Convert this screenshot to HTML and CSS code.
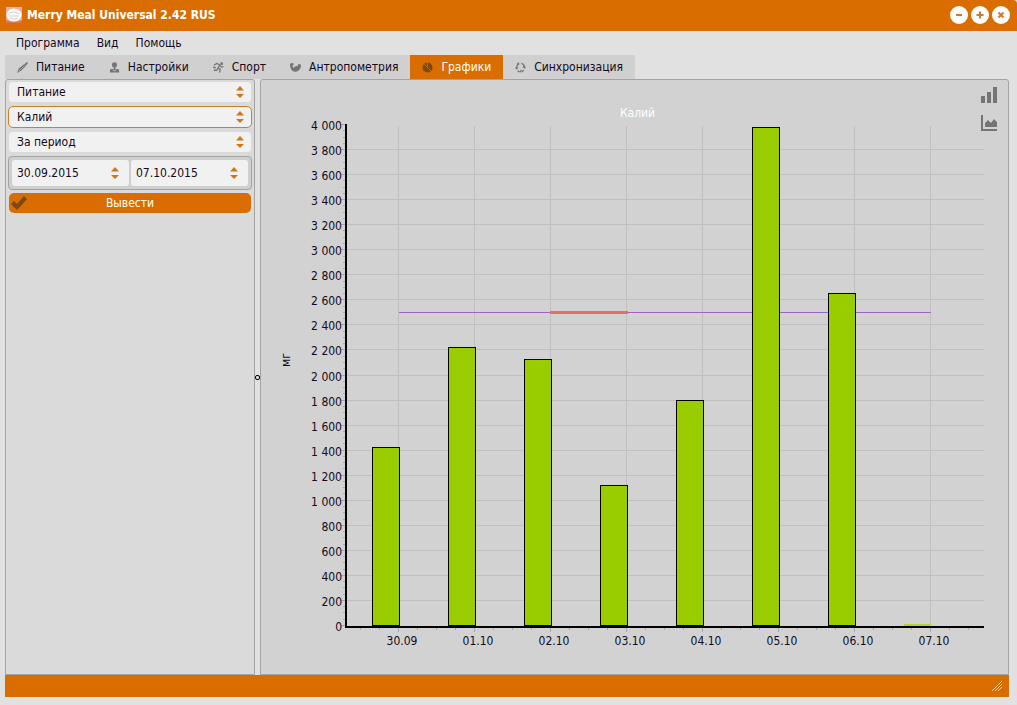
FILE: index.html
```html
<!DOCTYPE html>
<html lang="ru">
  <head>
    <meta charset="UTF-8" />
    <meta name="viewport" content="width=device-width, initial-scale=1.0" />
    <title>Merry Meal Universal 2.42 RUS</title>
    <link rel="stylesheet" href="styles.css">
  </head>
  <body>
    <header class="titlebar">
      <svg class="logo" viewBox="0 0 16 16">
        <rect width="16" height="16" fill="#e9b0a0" />
        <ellipse cx="8" cy="8" rx="7.5" ry="6.5" fill="#fff" />
        <path d="M2 8 Q5 4 8 5 T14 7 M3 9 H13 M4 11 Q8 13 12 11" fill="none" stroke="#d8cac4" />
        <path d="M0 13 Q8 17 16 13 V16 H0z" fill="#d9744c" />
      </svg>
      <h1>Merry Meal Universal 2.42 RUS</h1>
      <div class="window-buttons">
        <button aria-label="Свернуть"><svg viewBox="0 0 18 18"><path d="M6 9h6" /></svg></button>
        <button aria-label="Развернуть"><svg viewBox="0 0 18 18"><path d="M5.500 9h7M9 5.500v7" /></svg></button>
        <button aria-label="Закрыть"><svg viewBox="0 0 18 18"><path d="M6.500 6.500l5 5M11.500 6.500l-5 5" /></svg></button>
      </div>
    </header>

    <nav class="menu">
      <a href="#">Программа</a>
      <a href="#">Вид</a>
      <a href="#">Помощь</a>
    </nav>

    <nav class="tabs">
      <button>
        <svg viewBox="0 0 12 12"><path d="M0 12L2 7L7 3L11 0L12 1L9 5L5 9z" /><path d="M2 10L9 3" stroke="#d0d0d0" fill="none" stroke-width=".5" /></svg>
        Питание
      </button>
      <button>
        <svg viewBox="0 0 12 12"><circle cx="6" cy="3" r="2.800" /><path d="M5 5h2v2.500h2.500q1.500 0 1.500 1.500v2.500H1V9q0-1.500 1.500-1.500H5z" /><path d="M4 8l2 2 2-2" stroke="#d0d0d0" fill="none" /></svg>
        Настройки
      </button>
      <button>
        <svg viewBox="0 0 12 12"><circle cx="9.500" cy="1.800" r="1.500" /><path d="M1 3.500L4 1.500L7.500 3L5.500 6.500L8 8L7 11.500M5.500 6.500L4 9H1M7.500 3.500L9 5.500L11.500 5M0 6h3" stroke="#757575" stroke-width="1.400" fill="none" /></svg>
        Спорт
      </button>
      <button>
        <svg viewBox="0 0 12 12"><path d="M0 1.500L3.500 1L4 3L2.500 4L4 6.500Q5.500 4 8 4.500L9.500 2L12 3Q12 8 9 9.500Q6 12 2.500 9.500Q0 7 0 1.500z" /></svg>
        Антропометрия
      </button>
      <button class="active">
        <svg viewBox="0 0 12 12"><circle cx="6" cy="6" r="5.500" /><path d="M6 0v6l4 4M6 6L2 2" stroke="#d96d00" fill="none" stroke-width=".8" /></svg>
        Графики
      </button>
      <button>
        <svg viewBox="0 0 12 12"><path d="M4 2Q1.500 3.500 1.500 7M3 9.500L5 11M7 1.500Q10.500 2.500 10.500 7M9.500 9L7.500 10.500" stroke="#757575" stroke-width="1.500" fill="none" /><path d="M0 6h4L2 8.500zM8 6h4l-2-2.500zM4.500 0v3.500L2 2zM7 8v4L5 10z" /></svg>
        Синхронизация
      </button>
    </nav>

    <main class="workspace">
      <form class="sidebar">
        <div class="field">
          <select aria-label="Раздел"><option>Питание</option></select>
          <svg viewBox="0 0 8 12"><path d="M4 0l4 4.500H0zM4 12l4-4H0z" /></svg>
        </div>
        <div class="field focused">
          <select aria-label="Показатель"><option>Калий</option></select>
          <svg viewBox="0 0 8 12"><path d="M4 0l4 4.500H0zM4 12l4-4H0z" /></svg>
        </div>
        <div class="field">
          <select aria-label="Интервал"><option>За период</option></select>
          <svg viewBox="0 0 8 12"><path d="M4 0l4 4.500H0zM4 12l4-4H0z" /></svg>
        </div>
        <div class="period">
          <div class="date">
            <input type="text" aria-label="Начало" value="30.09.2015">
            <svg viewBox="0 0 8 12"><path d="M4 0l4 4.500H0zM4 12l4-4H0z" /></svg>
          </div>
          <div class="date">
            <input type="text" aria-label="Конец" value="07.10.2015">
            <svg viewBox="0 0 8 12"><path d="M4 0l4 4.500H0zM4 12l4-4H0z" /></svg>
          </div>
        </div>
        <button class="submit" type="button">
          <svg viewBox="0 0 16 16"><path d="M0 9L3 6L6 9L13 1L16 4L6 15z" /></svg>
          Вывести
        </button>
      </form>

      <div class="splitter"><span></span></div>

      <section class="chart-panel">
        <svg id="chart"></svg>
        <div class="chart-types">
          <button aria-label="Столбцы"><svg viewBox="0 0 18 18"><path d="M1 10h4v7H1zM7 6h4v11H7zM13 1h4v16h-4z" /></svg></button>
          <button aria-label="Область"><svg viewBox="0 0 18 18"><path d="M1 1h2v14h14v2H1zM5 13V9l3-3 3 3 3-4 3 3v5z" /></svg></button>
        </div>
      </section>
    </main>

    <footer class="statusbar">
      <svg viewBox="0 0 10 10"><path d="M0 10L10 0M3 10l7-7M6 10l4-4" /></svg>
    </footer>
    <script src="chart.js"></script>
  </body>
</html>
```

FILE: styles.css
```css
* {
  padding: 0;
  margin: 0;
  box-sizing: border-box;
}
body {
  min-height: 100vh;
  display: flex;
  flex-direction: column;
  background-color: #e1e1e1;
  color: #140a1c;
  font-family: "DejaVu Sans Condensed", "Noto Sans", sans-serif;
  font-size: 12px;
  line-height: 16px;
  padding-bottom: 8px;
}
button,
input,
select {
  font: inherit;
  color: inherit;
  border: none;
  background: none;
}
svg {
  display: block;
}
.titlebar {
  height: 31px;
  display: flex;
  align-items: center;
  padding: 0 7px 2px 6px;
  background-color: #d96d00;
  border-top-right-radius: 4px;
  color: #fff;
}
.logo {
  width: 16px;
  height: 16px;
  margin-right: 5px;
}
h1 {
  font-size: 12px;
}
.window-buttons {
  display: flex;
  gap: 3px;
  margin-left: auto;
}
.window-buttons button {
  width: 18px;
  height: 18px;
  border-radius: 50%;
  background-color: #fff;
}
.window-buttons path {
  stroke: #d07830;
  stroke-width: 2;
}
.menu {
  height: 24px;
  display: flex;
  align-items: center;
  gap: 17px;
  padding: 0 16px;
}
.menu a {
  color: inherit;
  text-decoration: none;
}
.tabs {
  height: 24px;
  display: flex;
  padding: 0 5px;
}
.tabs button {
  display: flex;
  align-items: center;
  gap: 8px;
  padding: 0 12px;
  background-color: #d0d0d0;
}
.tabs svg {
  width: 11px;
  height: 11px;
  fill: #757575;
}
.tabs .active {
  background-color: #d96d00;
  color: #fff;
}
.tabs .active svg {
  fill: #7a4819;
}
.workspace {
  flex: 1;
  display: flex;
  margin: 0 8px 0 5px;
}
.sidebar {
  width: 250px;
  display: flex;
  flex-direction: column;
  gap: 3px;
  padding: 1px 2px;
  background-color: #dadada;
  border: 1px solid #a3a3a3;
  border-radius: 3px 3px 0 0;
}
.field,
.date {
  position: relative;
}
.field select {
  display: block;
  width: 100%;
  height: 22px;
  padding: 0 8px;
  appearance: none;
  background-color: #f1f1f1;
  background-clip: padding-box;
  border: 1px solid transparent;
  border-radius: 5px;
}
.field.focused select {
  border-color: #d08020;
}
.field svg,
.date svg {
  position: absolute;
  top: 50%;
  right: 8px;
  width: 8px;
  height: 12px;
  margin-top: -6px;
  fill: #d07518;
}
.date svg {
  right: 10px;
}
.period {
  display: flex;
  gap: 2px;
  padding: 3px;
  background-color: #cfcfcf;
  border: 1px solid #a3a3a3;
  border-radius: 4px;
}
.date {
  flex: 1;
}
.date input {
  display: block;
  width: 100%;
  height: 26px;
  padding: 0 5px;
  background-color: #f1f1f1;
  border-radius: 3px;
}
.submit {
  position: relative;
  height: 20px;
  margin: 0 1px;
  background-color: #d96d00;
  border-radius: 5px;
  color: #fff;
}
.submit svg {
  position: absolute;
  left: 2px;
  top: 2px;
  width: 16px;
  height: 16px;
  fill: #7a4819;
}
.splitter {
  width: 5px;
  display: flex;
  align-items: center;
  justify-content: center;
}
.splitter span {
  flex: none;
  width: 5px;
  height: 5px;
  border: 1px solid #000;
  border-radius: 2px;
}
.chart-panel {
  position: relative;
  flex: 1;
  min-width: 0;
  background-color: #d2d2d2;
  border: 1px solid #a3a3a3;
  border-radius: 3px 3px 0 0;
}
#chart {
  position: absolute;
  inset: 0;
  width: 100%;
  height: 100%;
}
.chart-types {
  position: absolute;
  top: 6px;
  right: 10px;
  display: grid;
  gap: 10px;
}
.chart-types svg {
  width: 18px;
  height: 18px;
  fill: #757575;
}
.statusbar {
  height: 22px;
  display: flex;
  align-items: center;
  justify-content: flex-end;
  margin: 0 8px 0 5px;
  padding-right: 7px;
  background-color: #d96d00;
}
.statusbar svg {
  width: 10px;
  height: 10px;
  fill: none;
  stroke: #f6cf9c;
}

/* chart */
.grid {
  fill: #bfbfbf;
}
.tick {
  fill: #a8a8a8;
}
.axis {
  fill: #000;
}
.bar {
  fill: #9acd00;
  stroke: #000;
}
.bar-empty {
  fill: #b2d235;
}
.norm {
  fill: #9a68c0;
}
.norm-active {
  fill: #e0706a;
}
.label {
  fill: #140a1c;
}
.title {
  fill: #fff;
}
```

FILE: chart.js
```js
const chart = document.getElementById("chart");
const days = [
  ["30.09", 1425],
  ["01.10", 2220],
  ["02.10", 2125],
  ["03.10", 1120],
  ["04.10", 1800],
  ["05.10", 3980],
  ["06.10", 2650],
  ["07.10", 0],
];
const norm = 2500;
const max = 4000;

function rect(x, y, width, height, name) {
  return `<rect class="${name}" x="${x}" y="${y}" width="${width}" height="${height}" />`;
}

function text(x, y, value, anchor, name = "label") {
  return `<text class="${name}" x="${x}" y="${y}" text-anchor="${anchor}">${value}</text>`;
}

function drawChart() {
  const { width, height } = chart.getBoundingClientRect();
  const left = 84;
  const right = width - 24;
  const top = 44;
  const bottom = height - 47;
  const zero = bottom - 2;
  const step = Math.round((right - left) / 8.4);
  const dayX = (i) => left + 53 + i * step;
  const valueY = (v) => Math.round(zero - (v / max) * (zero - top));
  let out = "";

  for (let v = 0; v <= max; v += 50) {
    const major = v % 200 === 0;
    out += rect(left - (major ? 4 : 2), valueY(v), major ? 4 : 2, 1, "tick");
    if (!major) continue;
    if (v > 0 && v < max) {
      out += rect(left + 2, valueY(v), right - left - 2, 1, "grid");
    }
    const label = v < 1000 ? v : `${Math.floor(v / 1000)} ${String(v % 1000).padStart(3, "0")}`;
    out += text(left - 3, valueY(v) + 6, label, "end");
  }

  for (let x = left + 15; x < right; x += step / 4) {
    out += rect(x, bottom + 1, 1, 2, "tick");
  }
  days.forEach(([date], i) => {
    out += rect(dayX(i), top + 2, 1, bottom - top, "grid");
    out += rect(dayX(i), bottom + 1, 1, 4, "tick");
    out += text(dayX(i) + 4, bottom + 18, date, "middle");
  });

  out += rect(dayX(0) + 1, valueY(norm), dayX(7) - dayX(0), 1, "norm");
  out += rect(dayX(2), valueY(norm) - 1, step + 2, 3, "norm-active");

  days.forEach(([, value], i) => {
    const x = dayX(i) - 26;
    if (value > 0) {
      out += rect(x + 0.5, valueY(value) + 0.5, 27, zero - valueY(value), "bar");
    } else {
      out += rect(x, zero - 1, 27, 2, "bar-empty");
    }
  });

  out += rect(left, top, 2, bottom - top + 1, "axis");
  out += rect(left, bottom - 1, right - left, 2, "axis");
  out += text((left + right) / 2 - 27, 37, "Калий", "middle", "title");
  out += `<text class="label" transform="translate(29 ${height / 2 - 17}) rotate(-90)" text-anchor="middle">мг</text>`;
  chart.innerHTML = out;
}

window.addEventListener("resize", drawChart);
drawChart();
```
